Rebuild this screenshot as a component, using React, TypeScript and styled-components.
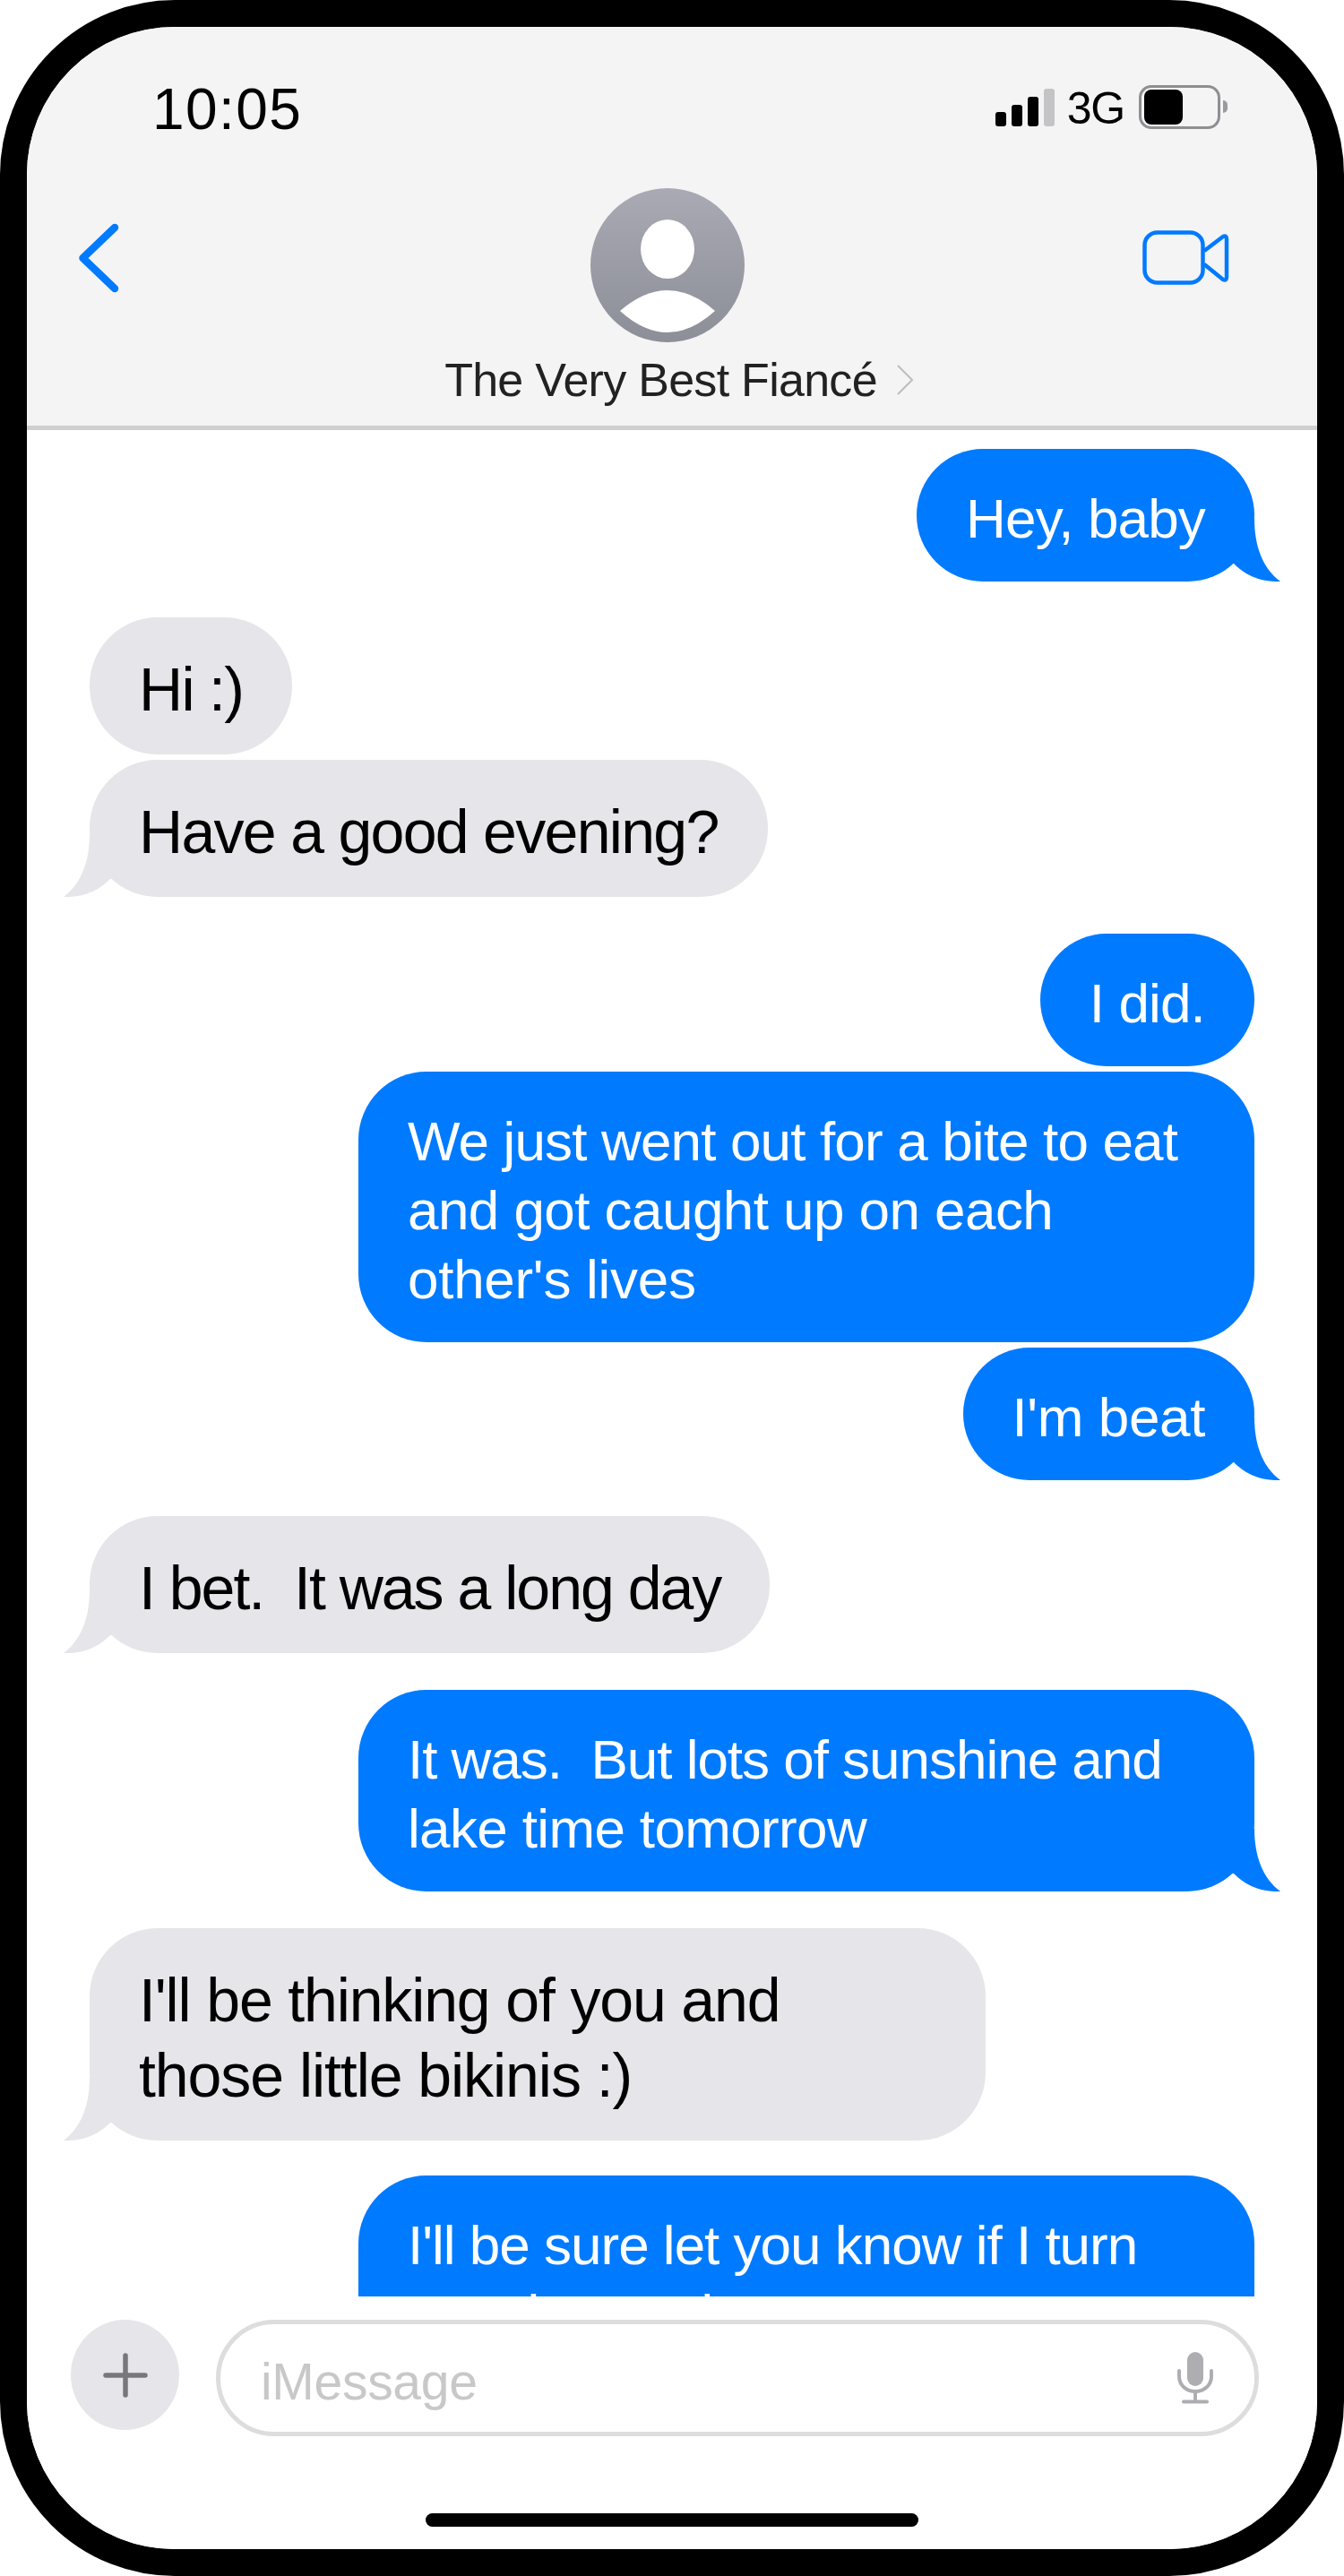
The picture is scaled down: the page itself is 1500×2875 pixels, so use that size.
import React from "react";
import styled, { createGlobalStyle } from "styled-components";

const Global = createGlobalStyle`
  html, body { margin: 0; padding: 0; background: #fff; }
  * { box-sizing: border-box; }
`;

const FONT = `"Liberation Sans", Arial, sans-serif`;

const Phone = styled.div`
  width: 1500px;
  height: 2875px;
  border: 30px solid #000;
  border-radius: 195px;
  background: #fff;
  overflow: hidden;
  display: flex;
  flex-direction: column;
  font-family: ${FONT};
`;

const Header = styled.header`
  flex: none;
  height: 450px;
  background: #f4f4f4;
  border-bottom: 5px solid #cfcfcf;
`;

const StatusBar = styled.div`
  height: 180px;
  display: flex;
  justify-content: space-between;
  align-items: flex-start;
  padding: 0 100px 0 140px;
`;

const Time = styled.div`
  margin-top: 61px;
  font-size: 64px;
  line-height: 62px;
  font-weight: 400;
  letter-spacing: 1.4px;
  color: #000;
`;

const StatusGroup = styled.div`
  margin-top: 65px;
  height: 49px;
  display: flex;
  align-items: center;
`;

const Signal = styled.div`
  display: flex;
  align-items: flex-end;
  gap: 6px;
  height: 43px;
`;

const SignalBar = styled.span<{ $h: number; $off?: boolean }>`
  display: block;
  width: 12px;
  height: ${(p) => p.$h}px;
  border-radius: 3px;
  background: ${(p) => (p.$off ? "#c4c4c6" : "#000")};
`;

const Network = styled.span`
  margin: 3px 16px 0 14px;
  font-size: 50px;
  line-height: 46px;
  letter-spacing: -1.2px;
  color: #000;
`;

const Battery = styled.div`
  position: relative;
  width: 91px;
  height: 49px;
  padding: 2px 3px;
  margin-right: 8px;
  border: 3px solid #8e8e93;
  border-radius: 14px;
  &::after {
    content: "";
    position: absolute;
    right: -11px;
    top: 14px;
    width: 5px;
    height: 14px;
    background: #9a9a9f;
    border-radius: 0 5px 5px 0;
  }
`;

const BatteryFill = styled.div`
  width: 43px;
  height: 100%;
  background: #000;
  border-radius: 8px;
`;

const Nav = styled.div`
  display: grid;
  grid-template-columns: 1fr auto 1fr;
`;

const BackSlot = styled.div`
  padding: 36px 0 0 50px;
`;

const VideoSlot = styled.div`
  display: flex;
  justify-content: flex-end;
  padding: 40px 95px 0 0;
`;

const Contact = styled.div`
  display: flex;
  flex-direction: column;
  align-items: center;
`;

const AvatarArt = styled.svg`
  display: block;
  margin-right: 10px;
`;

const NameRow = styled.div`
  margin: 12px 0 0 16px;
  display: flex;
  align-items: center;
  gap: 21px;
`;

const Name = styled.span`
  font-size: 52px;
  line-height: 60px;
  letter-spacing: -0.72px;
  color: #222;
  white-space: nowrap;
`;

const Messages = styled.main`
  flex: none;
  height: 2083px;
  overflow: hidden;
  padding: 21px 70px 0;
`;

const Row = styled.div<{ $me?: boolean; $gap: number }>`
  display: flex;
  justify-content: ${(p) => (p.$me ? "flex-end" : "flex-start")};
  margin-bottom: ${(p) => p.$gap}px;
`;

const Bubble = styled.div<{ $me?: boolean; $wide?: boolean }>`
  position: relative;
  width: ${(p) => (p.$wide ? "1000px" : "auto")};
  padding: ${(p) => (p.$me ? "39px 55px 32px" : "38px 55px 31px")};
  border-radius: 76px;
  background: ${(p) => (p.$me ? "#007aff" : "#e5e5ea")};
  color: ${(p) => (p.$me ? "#fff" : "#000")};
  font-size: ${(p) => (p.$me ? 62 : 68)}px;
  line-height: ${(p) => (p.$me ? 77 : 84)}px;
  letter-spacing: ${(p) => (p.$me ? -0.85 : -1.7)}px;
  white-space: pre-wrap;
`;

const Line = styled.span<{ $track?: number }>`
  display: block;
  ${(p) => (p.$track === undefined ? "" : `letter-spacing: ${p.$track}px;`)}
`;

const Tail = styled.svg<{ $me?: boolean }>`
  position: absolute;
  bottom: 0;
  ${(p) => (p.$me ? "right: -29px;" : "left: -29px; transform: scaleX(-1);")}
`;

const Composer = styled.footer`
  flex: 1;
  background: #fff;
  display: flex;
  flex-direction: column;
  padding-top: 26px;
`;

const ComposerRow = styled.div`
  display: flex;
  align-items: flex-start;
  padding-left: 49px;
  gap: 41px;
`;

const PlusButton = styled.div`
  width: 121px;
  height: 123px;
  border-radius: 50%;
  background: #e5e5ea;
  display: flex;
  align-items: center;
  justify-content: center;
`;

const InputPill = styled.div`
  width: 1164px;
  height: 130px;
  border: 5px solid #ddd;
  border-radius: 65px;
  display: flex;
  align-items: center;
  justify-content: space-between;
  padding: 0 45px 0 45px;
`;

const Placeholder = styled.span`
  font-size: 57px;
  line-height: 60px;
  letter-spacing: -0.3px;
  color: #c8c8c8;
  margin-top: 8px;
`;

const HomeBar = styled.div`
  width: 550px;
  height: 15px;
  margin: 86px 0 0 445px;
  border-radius: 8px;
  background: #000;
`;

type MsgLine = { t: string; track?: number };
type Msg = { lines: MsgLine[]; me?: boolean; wide?: boolean; tail?: boolean; gap: number };

const messages: Msg[] = [
  { lines: [{ t: "Hey, baby" }], me: true, tail: true, gap: 40 },
  { lines: [{ t: "Hi :)" }], gap: 6 },
  { lines: [{ t: "Have a good evening?" }], tail: true, gap: 41 },
  { lines: [{ t: "I did." }], me: true, gap: 6 },
  {
    lines: [
      { t: "We just went out for a bite to eat" },
      { t: "and got caught up on each", track: -0.56 },
      { t: "other's lives", track: -0.29 },
    ],
    me: true,
    wide: true,
    gap: 6,
  },
  { lines: [{ t: "I'm beat", track: -0.39 }], me: true, tail: true, gap: 40 },
  { lines: [{ t: "I bet.  It was a long day", track: -2 }], tail: true, gap: 41 },
  {
    lines: [
      { t: "It was.  But lots of sunshine and", track: -1.02 },
      { t: "lake time tomorrow", track: -0.65 },
    ],
    me: true,
    wide: true,
    tail: true,
    gap: 41,
  },
  {
    lines: [
      { t: "I'll be thinking of you and", track: -1.15 },
      { t: "those little bikinis :)", track: -1.06 },
    ],
    wide: true,
    tail: true,
    gap: 39,
  },
  {
    lines: [{ t: "I'll be sure let you know if I turn", track: -1 }, { t: "a crab or red" }],
    me: true,
    wide: true,
    gap: 0,
  },
];

const BubbleTail = ({ me }: { me?: boolean }) => (
  <Tail $me={me} width="60" height="70" viewBox="0 0 60 70">
    <path
      d="M31 0 C31 30 40 55 60 70 C44 70 26 68 8 50 L0 50 L0 0 Z"
      fill={me ? "#007aff" : "#e5e5ea"}
    />
  </Tail>
);

export default function App() {
  return (
    <>
      <Global />
      <Phone>
        <Header>
          <StatusBar>
            <Time>10:05</Time>
            <StatusGroup>
              <Signal>
                <SignalBar $h={16} />
                <SignalBar $h={24} />
                <SignalBar $h={33} />
                <SignalBar $h={42} $off />
              </Signal>
              <Network>3G</Network>
              <Battery>
                <BatteryFill />
              </Battery>
            </StatusGroup>
          </StatusBar>
          <Nav>
            <BackSlot>
              <svg width="56" height="84" viewBox="0 0 56 84" style={{ display: "block" }}>
                <polyline
                  points="48,8 12.5,42 48,76"
                  fill="none"
                  stroke="#007aff"
                  strokeWidth="8.5"
                  strokeLinecap="round"
                  strokeLinejoin="round"
                />
              </svg>
            </BackSlot>
            <Contact>
              <AvatarArt width="172" height="172" viewBox="0 0 172 172">
                <defs>
                  <linearGradient id="avatarGrad" x1="0" y1="0" x2="0" y2="1">
                    <stop offset="0" stopColor="#a9aab3" />
                    <stop offset="1" stopColor="#8c8e98" />
                  </linearGradient>
                </defs>
                <circle cx="86" cy="86" r="86" fill="url(#avatarGrad)" />
                <ellipse cx="86" cy="68" rx="30" ry="33" fill="#fff" />
                <path d="M33 137 Q86 91 139 137 Q86 185 33 137 Z" fill="#fff" />
              </AvatarArt>
              <NameRow>
                <Name>The Very Best Fiancé</Name>
                <svg width="20" height="36" viewBox="0 0 20 36" fill="none">
                  <path d="M2 2 L18 18 L2 34" stroke="#bdbdbd" strokeWidth="2" />
                </svg>
              </NameRow>
            </Contact>
            <VideoSlot>
              <svg width="105" height="75" viewBox="0 0 105 75" fill="none" stroke="#007aff" strokeWidth="4.5" strokeLinejoin="round">
                <rect x="7.5" y="9.5" width="65" height="56" rx="14" />
                <path d="M74 30 L95 14 Q99 12 99 17 V59 Q99 64 95 62 L74 45" />
              </svg>
            </VideoSlot>
          </Nav>
        </Header>
        <Messages>
          {messages.map((m, i) => (
            <Row key={i} $me={m.me} $gap={m.gap}>
              <Bubble $me={m.me} $wide={m.wide}>
                {m.lines.map((l, j) => (
                  <Line key={j} $track={l.track}>
                    {l.t}
                  </Line>
                ))}
                {m.tail && <BubbleTail me={m.me} />}
              </Bubble>
            </Row>
          ))}
        </Messages>
        <Composer>
          <ComposerRow>
            <PlusButton>
              <svg width="50" height="50" viewBox="0 0 50 50" fill="none" stroke="#77777c" strokeWidth="5.5" strokeLinecap="round">
                <path d="M25 3 V47 M3 25 H47" />
              </svg>
            </PlusButton>
            <InputPill>
              <Placeholder>iMessage</Placeholder>
              <svg width="42" height="58" viewBox="0 0 42 58" fill="none">
                <rect x="12" y="0" width="18" height="38" rx="9" fill="#aeaeb2" />
                <path d="M3 21 V27 C3 37 11 44 21 44 C31 44 39 37 39 27 V21" stroke="#aeaeb2" strokeWidth="4" strokeLinecap="round" />
                <path d="M21 44 V55 M8 55.5 H34" stroke="#aeaeb2" strokeWidth="4" strokeLinecap="round" />
              </svg>
            </InputPill>
          </ComposerRow>
          <HomeBar />
        </Composer>
      </Phone>
    </>
  );
}
